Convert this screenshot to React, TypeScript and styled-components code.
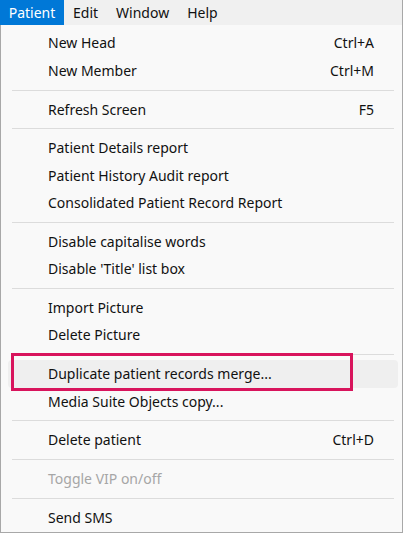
import React from "react";
import styled, { createGlobalStyle } from "styled-components";

type Item = {
  label: string;
  shortcut?: string;
  disabled?: boolean;
  marked?: boolean;
};

type Entry = Item | "sep";

const entries: Entry[] = [
  { label: "New Head", shortcut: "Ctrl+A" },
  { label: "New Member", shortcut: "Ctrl+M" },
  "sep",
  { label: "Refresh Screen", shortcut: "F5" },
  "sep",
  { label: "Patient Details report" },
  { label: "Patient History Audit report" },
  { label: "Consolidated Patient Record Report" },
  "sep",
  { label: "Disable capitalise words" },
  { label: "Disable 'Title' list box" },
  "sep",
  { label: "Import Picture" },
  { label: "Delete Picture" },
  "sep",
  { label: "Duplicate patient records merge...", marked: true },
  { label: "Media Suite Objects copy..." },
  "sep",
  { label: "Delete patient", shortcut: "Ctrl+D" },
  "sep",
  { label: "Toggle VIP on/off", disabled: true },
  "sep",
  { label: "Send SMS" },
];

const topMenus = ["Patient", "Edit", "Window", "Help"];

export default function App() {
  return (
    <>
      <GlobalStyle />
      <Screen>
        <MenuBar>
          {topMenus.map((m, i) => (
            <TopItem key={m} $active={i === 0}>
              {m}
            </TopItem>
          ))}
        </MenuBar>
        <Dropdown>
          {entries.map((e, i) =>
            e === "sep" ? (
              <Separator key={i} />
            ) : (
              <Row key={i} $hover={!!e.marked} $disabled={!!e.disabled}>
                <Label>{e.label}</Label>
                {e.shortcut && <Shortcut>{e.shortcut}</Shortcut>}
                {e.marked && <Callout />}
              </Row>
            )
          )}
        </Dropdown>
      </Screen>
    </>
  );
}

const GlobalStyle = createGlobalStyle`
  html, body {
    margin: 0;
    padding: 0;
    background: #f9f9f9;
  }
  body {
    font-family: "Noto Sans", "Open Sans", sans-serif;
    font-size: 14px;
    color: #111;
  }
`;

const Screen = styled.div`
  width: 403px;
  height: 533px;
  box-sizing: border-box;
  border-right: 1px solid #a8a8a8;
  display: flex;
  flex-direction: column;
  overflow: hidden;
`;

const MenuBar = styled.div`
  height: 25px;
  flex: none;
  display: flex;
  align-items: stretch;
  background: #f0f0f0;
`;

const TopItem = styled.div<{ $active: boolean }>`
  display: flex;
  align-items: center;
  justify-content: center;
  padding: ${({ $active }) => ($active ? "0 0 1px" : "0 9px 1px")};
  width: ${({ $active }) => ($active ? "64px" : "auto")};
  background: ${({ $active }) => ($active ? "#0078d7" : "transparent")};
  color: ${({ $active }) => ($active ? "#fff" : "#111")};
`;

const Dropdown = styled.div`
  flex: 1;
  border-left: 1px solid #a8a8a8;
  border-bottom: 1px solid #a8a8a8;
  background: #f9f9f9;
  padding: 4.7px 4px 0 7px;
  display: flex;
  flex-direction: column;
`;

const Row = styled.div<{ $hover: boolean; $disabled: boolean }>`
  position: relative;
  height: 27.4px;
  box-sizing: border-box;
  flex: none;
  display: flex;
  align-items: center;
  justify-content: space-between;
  padding: 0 24px 1px 40px;
  border-radius: 4px;
  background: ${({ $hover }) => ($hover ? "#efefef" : "transparent")};
  color: ${({ $disabled }) => ($disabled ? "#a6a6a6" : "#111")};
`;

const Label = styled.span`
  white-space: nowrap;
`;

const Shortcut = styled.span`
  white-space: nowrap;
`;

const Separator = styled.div`
  height: 1px;
  flex: none;
  margin: 5.2px 4px 5.2px 4px;
  background: #dcdcdc;
`;

const Callout = styled.div`
  position: absolute;
  left: 3px;
  top: -7px;
  width: 342px;
  height: 38px;
  box-sizing: border-box;
  border: 3px solid #d8145c;
  pointer-events: none;
`;
